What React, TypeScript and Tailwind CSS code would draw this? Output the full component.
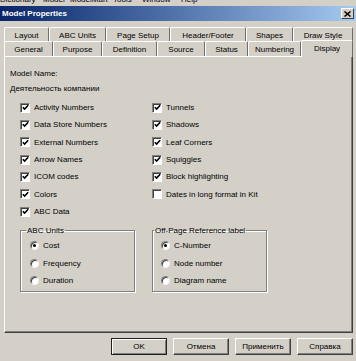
import React from "react";

const font = { fontFamily: '"Liberation Sans", Arial, sans-serif' };

function Check({ checked, label }: { checked: boolean; label: string }) {
  return (
    <div className="flex h-[17.33px] items-center">
      <div className="flex h-[10px] w-[10px] items-center justify-center border border-t-[#808080] border-l-[#808080] border-b-white border-r-white bg-white shadow-[inset_1px_1px_0_#404040]">
        {checked && (
          <svg width="7" height="7" viewBox="0 0 7 7">
            <path d="M0.8 3.2 L2.6 5 L6.2 1.2" fill="none" stroke="#000" strokeWidth="1.6" />
          </svg>
        )}
      </div>
      <span className="ml-[4px] whitespace-nowrap">{label}</span>
    </div>
  );
}

function Radio({ checked, label }: { checked: boolean; label: string }) {
  return (
    <div className="flex h-[17.33px] items-center">
      <div className="flex h-[9px] w-[9px] items-center justify-center rounded-full border border-t-[#808080] border-l-[#808080] border-b-[#f4f4f4] border-r-[#f4f4f4] bg-white shadow-[inset_1px_1px_0_#404040]">
        {checked && <div className="h-[3px] w-[3px] rounded-full bg-black" />}
      </div>
      <span className="ml-[4px] whitespace-nowrap">{label}</span>
    </div>
  );
}

function Tab({ label, w, active }: { label: string; w: number; active?: boolean }) {
  return (
    <div
      style={{ width: w }}
      className={
        "flex items-center justify-center rounded-t-[2px] border-t border-l border-r border-t-white border-l-white border-r-[#6e6e6e] bg-[#d4d0c8] " +
        (active ? "relative z-10 -mb-px h-[17px] pb-[2px]" : "h-[15px]")
      }
    >
      {label}
    </div>
  );
}

function Button({ label, def }: { label: string; def?: boolean }) {
  return (
    <div
      className={
        "flex h-[17px] w-[56px] items-center justify-center bg-[#d4d0c8] " +
        (def
          ? "border border-[#202020] shadow-[inset_1px_1px_0_#fff,inset_-1px_-1px_0_#808080]"
          : "border border-t-white border-l-white border-b-[#404040] border-r-[#404040] shadow-[inset_-1px_-1px_0_#808080]")
      }
    >
      {label}
    </div>
  );
}

export default function App() {
  const row1 = [
    ["Layout", 45],
    ["ABC Units", 57],
    ["Page Setup", 64],
    ["Header/Footer", 76],
    ["Shapes", 47],
    ["Draw Style", 60],
  ] as const;
  const row2 = [
    ["General", 49],
    ["Purpose", 49],
    ["Definition", 55],
    ["Source", 48],
    ["Status", 43],
    ["Numbering", 53],
  ] as const;

  return (
    <div
      style={font}
      className="flex h-[361px] w-[356px] flex-col overflow-hidden bg-[#d4d0c8] text-[8px] leading-[11px] text-black"
    >
      {/* menu strip, mostly scrolled off */}
      <div className="h-[6px] overflow-hidden">
        <div className="-mt-[6px] flex">
          <span className="w-[43px]">Dictionary</span>
          <span className="w-[27px]">Model</span>
          <span className="w-[43px]">ModelMart</span>
          <span className="w-[29px]">Tools</span>
          <span className="w-[39px]">Window</span>
          <span>Help</span>
        </div>
      </div>

      {/* title bar */}
      <div className="flex h-[15px] items-center justify-between bg-gradient-to-r from-[#0a246a] to-[#a6caf0] pl-[2px] pr-[2px]">
        <span className="font-bold text-white">Model Properties</span>
        <div className="flex h-[11px] w-[13px] items-center justify-center border border-t-white border-l-white border-b-[#404040] border-r-[#404040] bg-[#d4d0c8]">
          <svg width="7" height="6" viewBox="0 0 7 6">
            <path d="M0.5 0.5 L6.5 5.5 M6.5 0.5 L0.5 5.5" stroke="#000" strokeWidth="1.5" />
          </svg>
        </div>
      </div>

      {/* tabs */}
      <div className="ml-[4px] mt-[6px] w-[349px]">
        <div className="flex">
          {row1.map(([l, w]) => (
            <Tab key={l} label={l} w={w} />
          ))}
        </div>
        <div className="-mt-px flex h-[15px] items-end">
          {row2.map(([l, w]) => (
            <Tab key={l} label={l} w={w} />
          ))}
          <Tab label="Display" w={52} active />
        </div>
      </div>

      {/* panel */}
      <div className="ml-[4px] h-[277px] w-[349px] border border-t-white border-l-white border-b-[#404040] border-r-[#404040] pl-[5px] pt-[11px] shadow-[inset_-1px_-1px_0_#808080]">
        <div>Model Name:</div>
        <div className="mt-[4px]">Деятельность компании</div>

        <div className="ml-[10px] mt-[5px] flex">
          <div className="w-[132px]">
            <Check checked label="Activity Numbers" />
            <Check checked label="Data Store Numbers" />
            <Check checked label="External Numbers" />
            <Check checked label="Arrow Names" />
            <Check checked label="ICOM codes" />
            <Check checked label="Colors" />
            <Check checked label="ABC Data" />
          </div>
          <div>
            <Check checked label="Tunnels" />
            <Check checked label="Shadows" />
            <Check checked label="Leaf Corners" />
            <Check checked label="Squiggles" />
            <Check checked label="Block highlighting" />
            <Check checked={false} label="Dates in long format in Kit" />
          </div>
        </div>

        <div className="ml-[10px] mt-[5px] flex gap-[17px]">
          <fieldset className="h-[67px] w-[115px] border border-[#808080] pl-[9px] pt-[1px] shadow-[1px_1px_0_#fff,inset_1px_1px_0_#fff]">
            <legend className="ml-[-4px] px-[1px]">ABC Units</legend>
            <Radio checked label="Cost" />
            <Radio checked={false} label="Frequency" />
            <Radio checked={false} label="Duration" />
          </fieldset>
          <fieldset className="h-[67px] w-[115px] border border-[#808080] pl-[8px] pt-[1px] shadow-[1px_1px_0_#fff,inset_1px_1px_0_#fff]">
            <legend className="ml-[-7px] px-[1px]">Off-Page Reference label</legend>
            <Radio checked label="C-Number" />
            <Radio checked={false} label="Node number" />
            <Radio checked={false} label="Diagram name" />
          </fieldset>
        </div>
      </div>

      {/* buttons */}
      <div className="mt-[5px] flex justify-end gap-[6px] pr-[3px]">
        <Button label="OK" def />
        <Button label="Отмена" />
        <Button label="Применить" />
        <Button label="Справка" />
      </div>
    </div>
  );
}
